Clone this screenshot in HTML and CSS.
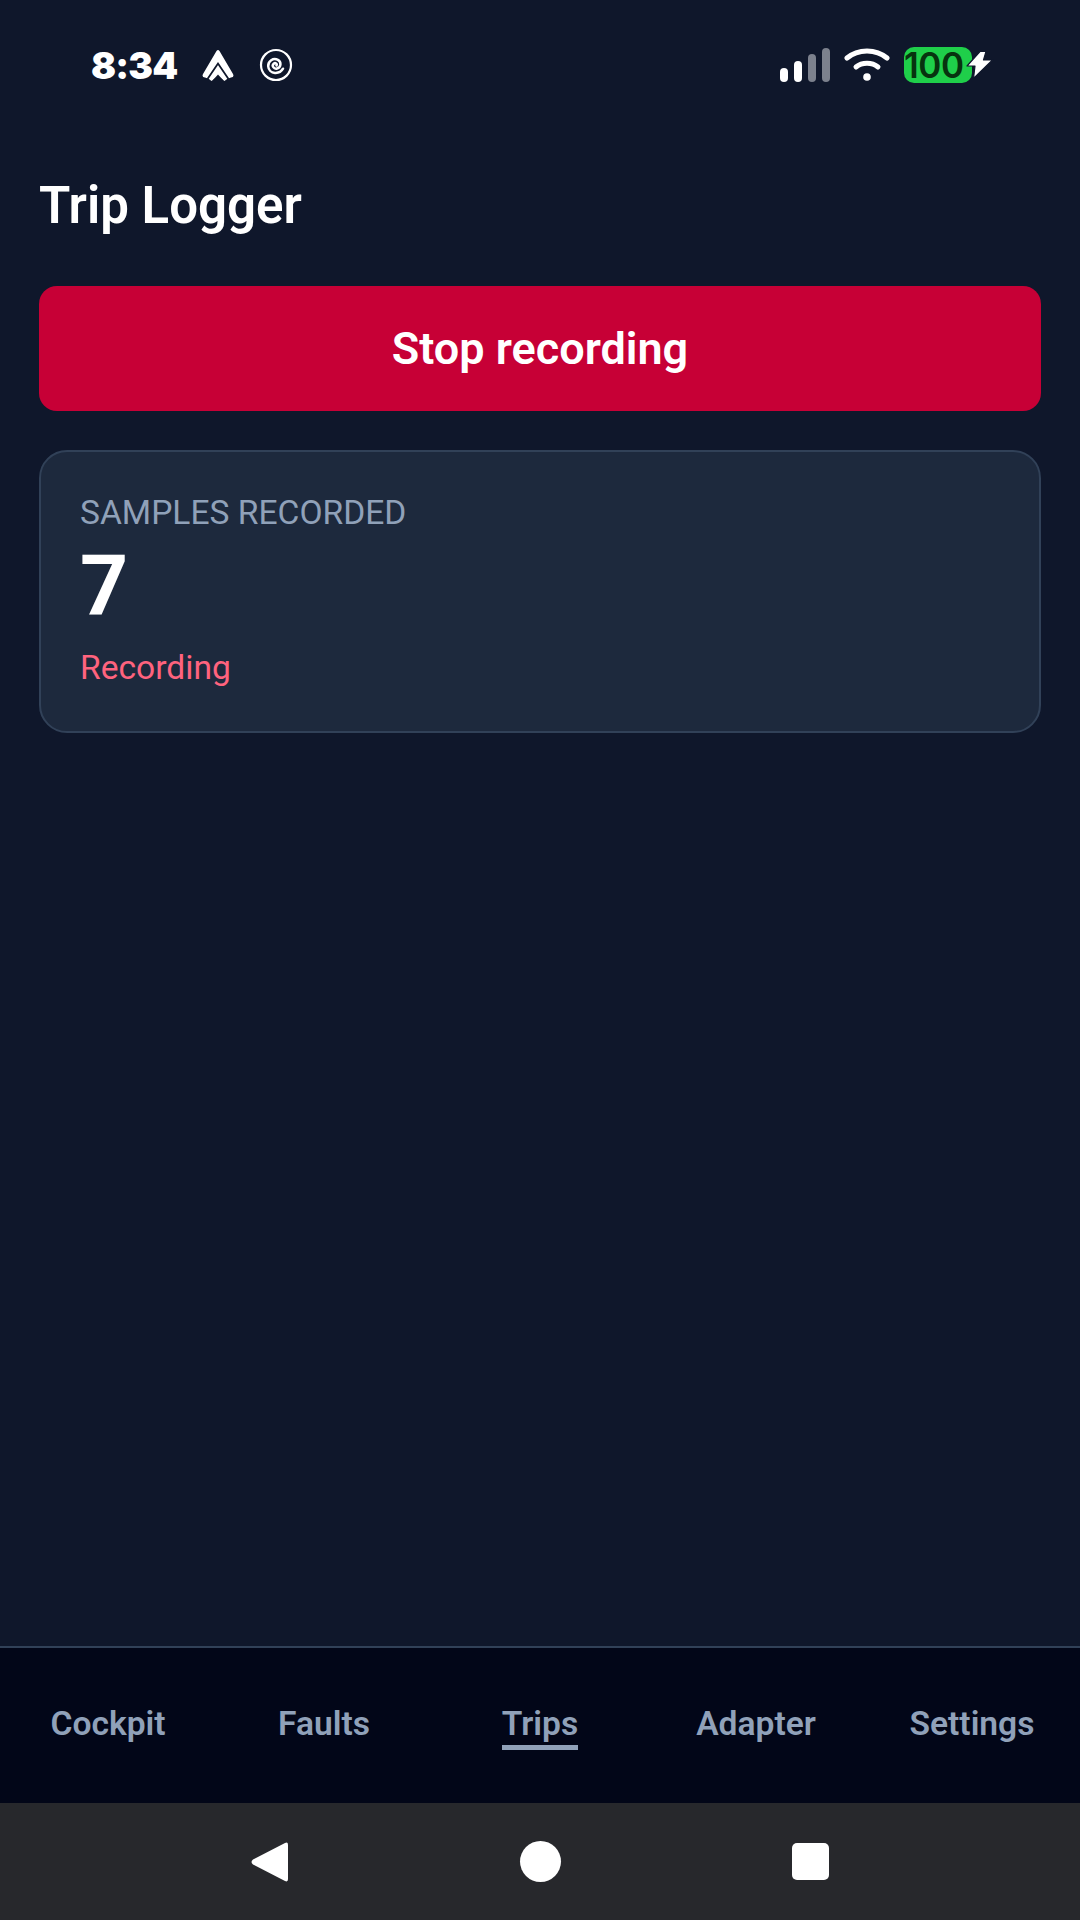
FILE: index.html

```html
<!DOCTYPE html>
<html lang="en">
<head>
  <meta charset="UTF-8" />
  <title>Trip Logger</title>
  <meta name="viewport" content="width=device-width, initial-scale=1.0" />
  <link rel="stylesheet" href="styles.css">
</head>
<body>

  <!-- Status bar -->
  <div class="status-bar">
    <div class="status-left">
      <span class="clock">8:34</span>
      <svg class="icon-auto" width="32" height="32" viewBox="0 0 32 32">
        <path d="M14.500 2 Q16 0 17.500 2 L31 25 Q32.500 28.500 29 28.500 Q25 29 22.500 32 L16 27 L9.500 32 Q7 29 3 28.500 Q-.5 28.500 1 25 Z" fill="#fff"/>
        <path d="M5.500 30 L16 14.500 L26.500 30" fill="none" stroke="#0f172b" stroke-width="1.800"/>
        <path d="M16 25.500 L11 31 H21 Z" fill="#0f172b"/>
      </svg>
      <svg class="icon-swirl" width="34" height="34" viewBox="0 0 34 34" fill="none" stroke="#fff" stroke-linecap="round">
        <circle cx="17" cy="17" r="15" stroke-width="2.200"/>
        <path d="M17.500 17.500c1.200-1.700-1.200-3.200-2.800-1.800-2.300 2 .1 5.600 3.400 4.800 4-1 4.600-6.600.8-8.600-4.700-2.400-10 1.200-9.700 6.300.2 3.600 3.200 6.400 6.800 6.700 3.400.2 6.400-1.400 8-4.200" stroke-width="2.500"/>
      </svg>
    </div>
    <div class="status-right">
      <div class="signal">
        <span class="bar bar-1"></span>
        <span class="bar bar-2"></span>
        <span class="bar bar-3 dim"></span>
        <span class="bar bar-4 dim"></span>
      </div>
      <svg class="icon-wifi" width="46" height="36" viewBox="0 0 46 36" fill="none" stroke="#fff" stroke-width="5" stroke-linecap="round">
        <path d="M3 11C14 1.500 32 1.500 43 11"/>
        <path d="M12 20C18 15 28 15 34 20"/>
        <circle cx="23" cy="30" r="3.800" fill="#fff" stroke="none"/>
      </svg>
      <div class="battery">
        <span class="battery-level">100</span>
        <svg class="icon-bolt" width="28" height="30" viewBox="0 0 28 30">
          <path d="M14 1.500 L1 16 H9 L7.500 28.500 L26.500 10 H17.500 L20 1.500 Z" fill="#fff" stroke="#0f172b" stroke-width="1.200" stroke-linejoin="round"/>
        </svg>
      </div>
    </div>
  </div>

  <!-- Trip screen -->
  <main class="screen">
    <h1 class="screen-title">Trip Logger</h1>
    <button class="stop-btn">Stop recording</button>
    <div class="card">
      <div class="card-label">SAMPLES RECORDED</div>
      <div class="card-value">7</div>
      <div class="card-status">Recording</div>
    </div>
  </main>

  <!-- Tabs -->
  <nav class="tabs">
    <a class="tab">Cockpit</a>
    <a class="tab">Faults</a>
    <a class="tab active">Trips</a>
    <a class="tab">Adapter</a>
    <a class="tab">Settings</a>
  </nav>

  <!-- Android nav bar -->
  <div class="system-nav">
    <svg width="40" height="42" viewBox="0 0 40 42">
      <path d="M38 4 V38 Q38 41.500 35 40 L3 23.500 Q0 21 3 18.500 L35 2 Q38 .5 38 4 Z" fill="#fff"/>
    </svg>
    <span class="nav-circle"></span>
    <span class="nav-square"></span>
  </div>

</body>
</html>
```

FILE: styles.css

```css
* {
  box-sizing: border-box;
}

body {
  margin: 0;
  height: 1920px;
  background-color: #0f172b;
  color: white;
  font-family: Roboto, Arial, sans-serif;
  display: flex;
  flex-direction: column;
}

/* Status Bar */
.status-bar {
  height: 130px;
  padding: 0 86px 0 91px;
  display: flex;
  align-items: center;
  justify-content: space-between;
}

.status-left,
.status-right {
  display: flex;
  align-items: center;
}

.clock {
  font-family: Inter, Arial, sans-serif;
  font-size: 37px;
  font-weight: 900;
  letter-spacing: -0.800px;
  margin-right: 25px;
}

.icon-swirl {
  margin-left: 25px;
}

.signal {
  display: flex;
  align-items: flex-end;
  gap: 6px;
  height: 34px;
}

.bar {
  width: 8px;
  background: #fff;
  border-radius: 4px;
}

.bar.dim {
  background: #7c818d;
}

.bar-1 { height: 14px; }
.bar-2 { height: 21px; }
.bar-3 { height: 28px; }
.bar-4 { height: 34px; }

.icon-wifi {
  margin-left: 14px;
}

.battery {
  display: flex;
  align-items: center;
  margin-left: 14px;
}

.battery-level {
  width: 68px;
  height: 36px;
  background: #1fcf4a;
  border-radius: 10px;
  color: #07330f;
  font-family: Inter, Arial, sans-serif;
  font-size: 35px;
  font-weight: 600;
  letter-spacing: -0.500px;
  line-height: 36px;
  white-space: nowrap;
}

.icon-bolt {
  margin-left: -6px;
}

/* Screen */
.screen {
  flex: 1;
  padding: 46px 39px 0;
}

.screen-title {
  margin: 0 0 50px;
  font-size: 51px;
  line-height: 60px;
  font-weight: 600;
}

.stop-btn {
  display: block;
  width: 100%;
  height: 125px;
  background-color: #c70036;
  color: white;
  border: none;
  border-radius: 18px;
  font-family: Roboto, Arial, sans-serif;
  font-size: 45px;
  font-weight: 600;
}

.card {
  margin-top: 39px;
  height: 283px;
  padding: 42px 39px;
  background-color: #1d293d;
  border: 2px solid #314158;
  border-radius: 28px;
}

.card-label {
  font-size: 33.600px;
  line-height: 38px;
  color: #90a1b9;
}

.card-value {
  margin-top: 8px;
  font-size: 84px;
  line-height: 92px;
  font-weight: 700;
}

.card-status {
  font-size: 33.600px;
  line-height: 40px;
  color: #ff637e;
  margin-top: 16px;
}

/* Tabs */
.tabs {
  height: 157px;
  border-top: 2px solid #314158;
  background-color: #020618;
  display: grid;
  grid-template-columns: repeat(5, 1fr);
  align-items: center;
  justify-items: center;
}

.tab {
  font-size: 33.600px;
  line-height: 40px;
  font-weight: 600;
  color: #90a1b9;
  padding: 3px 0 1px;
  border-bottom: 5px solid transparent;
}

.tab.active {
  border-bottom-color: #90a1b9;
}

/* Android nav */
.system-nav {
  height: 117px;
  background-color: #27282c;
  display: grid;
  grid-template-columns: repeat(3, 270px);
  justify-content: center;
  justify-items: center;
  align-items: center;
}

.nav-circle {
  width: 41px;
  height: 41px;
  border-radius: 50%;
  background: #fff;
}

.nav-square {
  width: 37px;
  height: 37px;
  border-radius: 5px;
  background: #fff;
}
```
